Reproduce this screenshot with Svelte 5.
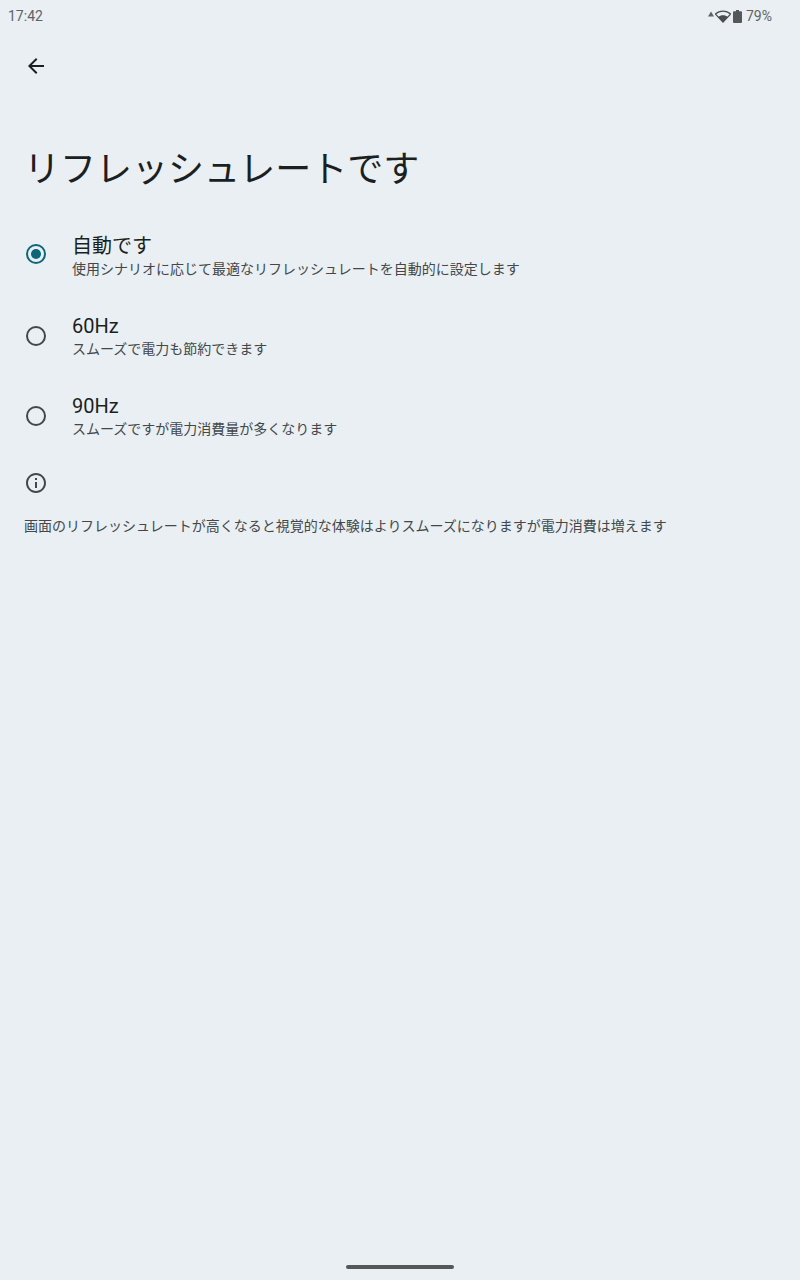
<script>
  let selected = $state('auto');
  const options = [
    { id: 'auto', title: '自動です', desc: '使用シナリオに応じて最適なリフレッシュレートを自動的に設定します' },
    { id: '60', title: '60Hz', desc: 'スムーズで電力も節約できます' },
    { id: '90', title: '90Hz', desc: 'スムーズですが電力消費量が多くなります' }
  ];
</script>

<div class="screen">
  <header class="status">
    <span class="time">17:42</span>
    <div class="status-right">
      <svg class="updown" width="6" height="6" viewBox="0 0 6 6"><path d="M3 .5 6 5.500H0Z" fill="#5f6368" /></svg>
      <svg class="wifi" width="16" height="13" viewBox="0 0 16 12">
        <path d="M8 11.500.4 3.600C2.400 1.700 5 .6 8 .6s5.600 1.100 7.600 3Z" fill="none" stroke="#4a4d50" stroke-width="1.300" />
        <path d="M8 11.500 3.300 6.500C4.500 5.400 6.100 4.800 8 4.800s3.500.6 4.700 1.700Z" fill="#4a4d50" />
      </svg>
      <svg class="battery" width="9" height="13" viewBox="0 0 9 13">
        <path d="M3 0h3v1.300h2a1 1 0 0 1 1 1V12a1 1 0 0 1-1 1H1a1 1 0 0 1-1-1V2.300a1 1 0 0 1 1-1h2Z" fill="#55585b" />
      </svg>
      <span class="pct">79%</span>
    </div>
  </header>

  <button class="back" aria-label="戻る">
    <svg width="24" height="24" viewBox="0 0 24 24">
      <path d="M20 11H7.830l5.590-5.590L12 4l-8 8 8 8 1.410-1.410L7.830 13H20v-2z" fill="#1b1f22" />
    </svg>
  </button>

  <h1>リフレッシュレートです</h1>

  <div class="options">
    {#each options as opt}
      <button class="option" onclick={() => (selected = opt.id)}>
        <span class="radio" class:on={selected === opt.id}></span>
        <span class="label">
          <span class="title">{opt.title}</span>
          <span class="desc">{opt.desc}</span>
        </span>
      </button>
    {/each}
  </div>

  <div class="footer">
    <svg width="24" height="24" viewBox="0 0 24 24">
      <path d="M11 7h2v2h-2zm0 4h2v6h-2zm1-9C6.480 2 2 6.480 2 12s4.480 10 10 10 10-4.480 10-10S17.520 2 12 2zm0 18c-4.410 0-8-3.590-8-8s3.590-8 8-8 8 3.590 8 8-3.590 8-8 8z" fill="#43474a" />
    </svg>
    <p>画面のリフレッシュレートが高くなると視覚的な体験はよりスムーズになりますが電力消費は増えます</p>
  </div>

  <div class="spacer"></div>
  <div class="nav"><span class="pill"></span></div>
</div>

<style>
  :global(body) {
    margin: 0;
    background: #e9eff2;
  }
  .screen {
    width: 800px;
    height: 1280px;
    display: flex;
    flex-direction: column;
    background: #e9eff2;
    color: #1b1f22;
    font-family: Roboto, "Noto Sans CJK JP", sans-serif;
    overflow: hidden;
  }
  .status {
    height: 32px;
    flex: none;
    display: flex;
    align-items: center;
    justify-content: space-between;
    padding: 0 28px 0 8px;
    box-sizing: border-box;
    font-size: 14px;
    color: #5f6368;
  }
  .status-right {
    display: flex;
    align-items: center;
  }
  .updown { margin: 0 1px 5px 0; }
  .wifi { margin-right: 2px; }
  .battery { margin-right: 4px; }
  .back {
    flex: none;
    width: 48px;
    height: 48px;
    margin: 10px 0 0 12px;
    padding: 0;
    border: none;
    background: none;
    display: flex;
    align-items: center;
    justify-content: center;
  }
  h1 {
    margin: 56px 0 0 24px;
    font-size: 36px;
    font-weight: 400;
    line-height: 48px;
    color: #1b1f22;
  }
  .options {
    margin-top: 20px;
    display: flex;
    flex-direction: column;
  }
  .option {
    height: 80px;
    display: flex;
    align-items: center;
    gap: 26px;
    padding: 0 0 0 26px;
    border: none;
    background: none;
    font: inherit;
    color: inherit;
    text-align: left;
  }
  .option:first-child { height: 82px; }
  .option:first-child .radio { margin-bottom: 2px; }
  .option:first-child .label { margin-top: 2px; }
  .radio {
    flex: none;
    width: 20px;
    height: 20px;
    box-sizing: border-box;
    border: 2px solid #43474a;
    border-radius: 50%;
    display: flex;
    align-items: center;
    justify-content: center;
  }
  .radio.on { border-color: #0b6779; }
  .radio.on::after {
    content: "";
    width: 10px;
    height: 10px;
    border-radius: 50%;
    background: #0b6779;
  }
  .label {
    display: flex;
    flex-direction: column;
  }
  .title {
    font-size: 20px;
    line-height: 26px;
    color: #1b1f22;
  }
  .desc {
    font-size: 14px;
    line-height: 20px;
    color: #43474a;
  }
  .footer {
    margin: 15px 0 0 24px;
  }
  .footer svg { display: block; }
  .footer p {
    margin: 21px 0 0;
    font-size: 14px;
    line-height: 20px;
    color: #43474a;
  }
  .spacer { flex: 1; }
  .nav {
    height: 15px;
    flex: none;
    display: flex;
    justify-content: center;
    align-items: flex-start;
  }
  .pill {
    width: 108px;
    height: 4px;
    border-radius: 2px;
    background: #55585b;
  }
</style>
